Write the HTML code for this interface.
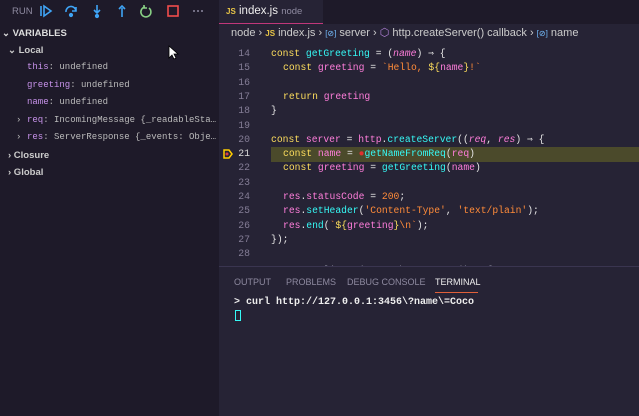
<!DOCTYPE html>
<html><head><meta charset="utf-8"><style>
*{margin:0;padding:0;box-sizing:border-box}
body{width:639px;height:416px;overflow:hidden;background:#1e1a29;font-family:"Liberation Sans",sans-serif;position:relative;color:#ccc}
.side{position:absolute;left:0;top:0;width:219px;height:416px;background:#1e1a29;overflow:hidden}
.ed{position:absolute;left:219px;top:0;width:420px;height:416px;background:#262335;overflow:hidden}
.mono{font-family:"Liberation Mono","DejaVu Sans Mono",monospace}
.abs{position:absolute;white-space:pre}
.v{font-size:9px;color:#bbb}
.k{color:#fede5d}.f{color:#36f9f6}.p{color:#ff7edb}.s{color:#ff8b39}.w{color:#e6e6e6}.vk{color:#c792ea}
.code div{position:absolute;left:0;height:14px;font-size:9.7px;line-height:14px;white-space:pre}
.ln{color:#847d96;width:31px;text-align:right;font-size:9.8px}
</style></head><body>
<div class="side">
  <div class="abs" style="left:12px;top:6px;font-size:9.5px;color:#8e8aa0">RUN</div>
  <svg class="abs" style="left:39px;top:3px" width="180" height="16">
    <g fill="none" stroke="#3fa4f5" stroke-width="1.6">
      <path d="M2 3v10M5 3l7 5-7 5z"/>
      <path d="M27 9a5 5 0 0 1 10-1M37 4v4h-4"/><circle cx="32" cy="12" r="1.3" fill="#3fa4f5"/>
      <path d="M58 2v8M55 7l3 3 3-3"/><circle cx="58" cy="13" r="1.3" fill="#3fa4f5"/>
      <path d="M83 14V5M80 6l3-3 3 3"/>
    </g>
    <path d="M106 4a5 5 0 1 0 4 1M105 2v3h3" fill="none" stroke="#89d185" stroke-width="1.6"/>
    <rect x="129" y="3" width="10" height="10" fill="none" stroke="#f14c4c" stroke-width="1.6"/>
    <g fill="#8e8aa0"><circle cx="155" cy="8" r="1"/><circle cx="159" cy="8" r="1"/><circle cx="163" cy="8" r="1"/></g>
  </svg>
  <div class="abs" style="left:2px;top:28px;font-size:9.5px;font-weight:bold;color:#ddd">⌄ VARIABLES</div>
  <div class="abs" style="left:8px;top:45px;font-size:9.5px;font-weight:bold;color:#ccc">⌄ Local</div>
  <div class="abs mono v" style="left:27px;top:62px"><span class="vk">this</span>: undefined</div>
  <div class="abs mono v" style="left:27px;top:80px"><span class="vk">greeting</span>: undefined</div>
  <div class="abs mono v" style="left:27px;top:97px"><span class="vk">name</span>: undefined</div>
  <div class="abs mono v" style="left:16px;top:115px">›</div>
  <div class="abs mono v" style="left:27px;top:115px"><span class="vk">req</span>: IncomingMessage {_readableSta…</div>
  <div class="abs mono v" style="left:16px;top:132px">›</div>
  <div class="abs mono v" style="left:27px;top:132px"><span class="vk">res</span>: ServerResponse {_events: Obje…</div>
  <div class="abs" style="left:8px;top:150px;font-size:9.5px;font-weight:bold;color:#ccc">› Closure</div>
  <div class="abs" style="left:8px;top:167px;font-size:9.5px;font-weight:bold;color:#ccc">› Global</div>
  <svg class="abs" style="left:168px;top:45px" width="12" height="16"><path d="M1 1v12l3-3 2 4 2-1-2-4h4z" fill="#fff" stroke="#000" stroke-width=".8"/></svg>
</div>
<div class="ed">
  <div class="abs" style="left:0;top:0;width:420px;height:24px;background:#1e1a29"></div>
  <div class="abs" style="left:0;top:0;width:104px;height:24px;background:#262335;border-bottom:1px solid #c0377a"></div>
  <div class="abs" style="left:7px;top:5px;font-size:11.5px;color:#eee"><span style="color:#e8c547;font-size:8px;font-weight:bold">JS</span> index.js <span style="color:#8e8aa0;font-size:9.5px">node</span></div>
  <div class="abs" style="left:12px;top:26px;font-size:11px;color:#ccc">node › <span style="color:#e8c547;font-size:8px;font-weight:bold">JS</span> index.js › <span style="color:#75beff;font-size:8px">[⊘]</span> server › <span style="color:#b180d7">⬡</span> http.createServer() callback › <span style="color:#75beff;font-size:8px">[⊘]</span> name</div>
  <div class="abs" style="left:52px;top:147px;width:368px;height:15px;background:#4b4a2b"></div>
  <svg class="abs" style="left:3px;top:148px" width="12" height="12"><path d="M2 2h5l3 4-3 4H2z" fill="none" stroke="#ffcc00" stroke-width="1.5"/><circle cx="5" cy="6" r="1.5" fill="#e04040"/></svg>
  <div class="code mono">
   <div style="top:47px"><span class="abs ln" style="left:0">14</span><span class="abs" style="left:52px"><span class="k">const</span> <span class="f">getGreeting</span> <span class="w">=</span> <span class="w">(</span><i class="p">name</i><span class="w">) ⇒ {</span></span></div>
   <div style="top:61px"><span class="abs ln" style="left:0">15</span><span class="abs" style="left:64px"><span class="k">const</span> <span class="p">greeting</span> <span class="w">=</span> <span class="s">`Hello, </span><span class="k">${</span><span class="p">name</span><span class="k">}</span><span class="s">!`</span></span></div>
   <div style="top:76px"><span class="abs ln" style="left:0">16</span></div>
   <div style="top:90px"><span class="abs ln" style="left:0">17</span><span class="abs" style="left:64px"><span class="k">return</span> <span class="p">greeting</span></span></div>
   <div style="top:104px"><span class="abs ln" style="left:0">18</span><span class="abs w" style="left:52px">}</span></div>
   <div style="top:119px"><span class="abs ln" style="left:0">19</span></div>
   <div style="top:133px"><span class="abs ln" style="left:0">20</span><span class="abs" style="left:52px"><span class="k">const</span> <span class="p">server</span> <span class="w">=</span> <span class="p">http</span><span class="w">.</span><span class="f">createServer</span><span class="w">((</span><i class="p">req</i><span class="w">, </span><i class="p">res</i><span class="w">) ⇒ {</span></span></div>
   <div style="top:147px"><span class="abs ln" style="left:0;color:#ddd">21</span><span class="abs" style="left:64px"><span class="k">const</span> <span class="p">name</span> <span class="w">=</span> <span style="color:#e03030">●</span><span class="f">getNameFromReq</span><span class="w">(</span><span class="p">req</span><span class="w">)</span></span></div>
   <div style="top:161px"><span class="abs ln" style="left:0">22</span><span class="abs" style="left:64px"><span class="k">const</span> <span class="p">greeting</span> <span class="w">=</span> <span class="f">getGreeting</span><span class="w">(</span><span class="p">name</span><span class="w">)</span></span></div>
   <div style="top:176px"><span class="abs ln" style="left:0">23</span></div>
   <div style="top:190px"><span class="abs ln" style="left:0">24</span><span class="abs" style="left:64px"><span class="p">res</span><span class="w">.</span><span class="p">statusCode</span> <span class="w">=</span> <span class="s">200</span><span class="w">;</span></span></div>
   <div style="top:204px"><span class="abs ln" style="left:0">25</span><span class="abs" style="left:64px"><span class="p">res</span><span class="w">.</span><span class="f">setHeader</span><span class="w">(</span><span class="s">'Content-Type'</span><span class="w">, </span><span class="s">'text/plain'</span><span class="w">);</span></span></div>
   <div style="top:219px"><span class="abs ln" style="left:0">26</span><span class="abs" style="left:64px"><span class="p">res</span><span class="w">.</span><span class="f">end</span><span class="w">(</span><span class="s">`</span><span class="k">${</span><span class="p">greeting</span><span class="k">}</span><span class="s">\n`</span><span class="w">);</span></span></div>
   <div style="top:233px"><span class="abs ln" style="left:0">27</span><span class="abs w" style="left:52px">});</span></div>
   <div style="top:247px"><span class="abs ln" style="left:0">28</span></div>
   <div style="top:264px"><span class="abs" style="left:64px;color:#a0a0b0">server.listen(port, hostname, () ⇒ {</span></div>
  </div>
  <div class="abs" style="left:0;top:266px;width:420px;height:150px;background:#262335;border-top:1px solid #3a3550"></div>
  <div class="abs" style="left:15px;top:277px;font-size:9px;color:#8e8aa0">OUTPUT</div>
  <div class="abs" style="left:67px;top:277px;font-size:9px;color:#8e8aa0">PROBLEMS</div>
  <div class="abs" style="left:128px;top:277px;font-size:9px;color:#8e8aa0">DEBUG CONSOLE</div>
  <div class="abs" style="left:216px;top:277px;font-size:9px;color:#eee">TERMINAL</div>
  <div class="abs" style="left:216px;top:292px;width:43px;height:1px;background:#e0603a"></div>
  <div class="abs mono" style="left:15px;top:297px;font-size:10px;color:#eee;font-weight:bold">&gt; curl http://127.0.0.1:3456\?name\=Coco</div>
  <div class="abs" style="left:16px;top:310px;width:6px;height:11px;border:1.5px solid #36f9f6"></div>
</div>
</body></html>
